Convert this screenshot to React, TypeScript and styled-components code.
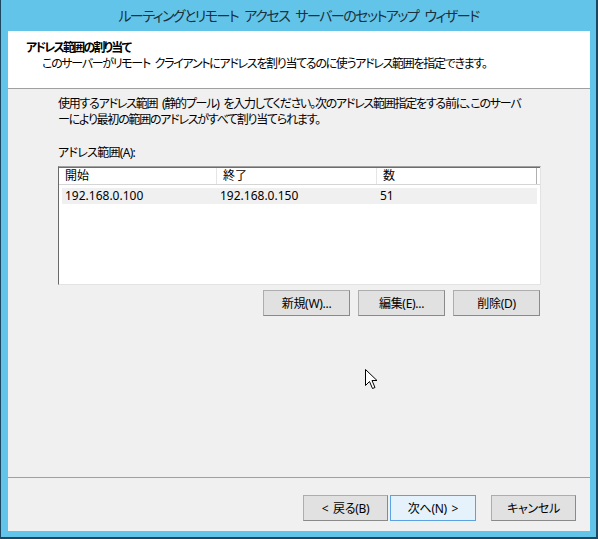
import React from "react";
import styled, { createGlobalStyle } from "styled-components";

const Global = createGlobalStyle`
  html, body { margin: 0; padding: 0; }
  body {
    width: 598px; height: 539px; overflow: hidden;
    font-family: "Noto Sans", "Noto Sans CJK JP", sans-serif;
    font-feature-settings: "palt" 1;
    color: #000;
  }
`;

const Window = styled.div`
  width: 598px;
  height: 539px;
  box-sizing: border-box;
  background: #62c4e8;
  border-left: 1px solid #1d4660;
  border-right: 2px solid #1d4660;
  border-bottom: 2px solid #1d4660;
  display: flex;
  flex-direction: column;
  position: relative;
`;

const TitleBar = styled.div`
  height: 31px;
  display: flex;
  align-items: center;
  justify-content: center;
  font-size: 14px;
  letter-spacing: -1.5px;
  word-spacing: 4px;
  color: #1b2f3c;
  padding-bottom: 1px;
  box-sizing: border-box;
`;

const Client = styled.div`
  flex: 1;
  margin: 0 6px 6px 7px;
  background: #f0f0f0;
  display: flex;
  flex-direction: column;
`;

const Header = styled.div`
  height: 58px;
  box-sizing: border-box;
  background: #fff;
  border-bottom: 1px solid #a0a0a0;
  padding: 9px 0 0 18px;
  font-size: 12px;
  line-height: 16px;
`;

const HeaderTitle = styled.div`
  font-weight: bold;
  letter-spacing: -1.8px;
`;

const HeaderSub = styled.div`
  padding-left: 16px;
  letter-spacing: -1.3px;
  word-spacing: 3px;
`;

const Body = styled.div`
  flex: 1;
  padding: 7px 0 0 50px;
  font-size: 12px;
  line-height: 16px;
  display: flex;
  flex-direction: column;
`;

const Intro = styled.p`
  margin: 0;
  letter-spacing: -1.25px;
  word-spacing: 3px;
`;

const FieldLabel = styled.div`
  margin-top: 17px;
  letter-spacing: -0.7px;
`;

const ListBox = styled.div`
  margin-top: 5px;
  width: 483px;
  height: 119px;
  box-sizing: border-box;
  background: #fff;
  border-top: 1px solid #a0a0a0;
  border-left: 1px solid #696969;
  border-right: 1px solid #e3e3e3;
  border-bottom: 1px solid #e3e3e3;
  padding: 0 0 0 3px;
`;

const HeaderRow = styled.div`
  display: grid;
  grid-template-columns: 158px 160px 160px;
  height: 18px;
  box-sizing: border-box;
  border-top: 1px solid #6d6d6d;
  border-bottom: 1px solid #d5d5d5;
  margin-left: -3px;
`;

const HeaderCell = styled.div<{ $last?: boolean }>`
  padding-left: 6px;
  line-height: 16px;
  border-right: 1px solid ${(p) => (p.$last ? "#b0b0b0" : "#e5e5e5")};
`;

const DataRow = styled.div`
  display: grid;
  grid-template-columns: 155px 160px 160px;
  margin-top: 3px;
  width: 475px;
  height: 16px;
  background: #f0f0f0;
`;

const DataCell = styled.div`
  padding-left: 3px;
  line-height: 16px;
`;

const ButtonRow = styled.div`
  display: flex;
  gap: 8px;
  justify-content: flex-end;
  width: 482px;
  margin-top: 5px;
`;

const Button = styled.button<{ $focused?: boolean; $w?: number }>`
  width: ${(p) => p.$w ?? 87}px;
  height: 26px;
  box-sizing: border-box;
  font-family: inherit;
  font-feature-settings: "palt" 1;
  font-size: 12px;
  letter-spacing: -0.3px;
  word-spacing: 2px;
  color: #000;
  padding: 0;
  background: ${(p) => (p.$focused ? "#e5f1fb" : "#e1e1e1")};
  border: 1px solid ${(p) => (p.$focused ? "#5aa2e0" : "#adadad")};
  border-right-color: ${(p) => (p.$focused ? "#5aa2e0" : "#8a8a8a")};
  border-bottom-color: ${(p) => (p.$focused ? "#5aa2e0" : "#8a8a8a")};
`;

const Footer = styled.div`
  height: 54px;
  box-sizing: border-box;
  border-top: 1px solid #a0a0a0;
  display: flex;
  justify-content: flex-end;
  align-items: flex-start;
  padding: 17px 14px 0 0;
`;

const FooterGroup = styled.div`
  display: flex;
  gap: 2px;
  margin-right: 15px;
`;

const Cursor = styled.svg`
  position: absolute;
  left: 364px;
  top: 369px;
`;

export default function App() {
  return (
    <>
      <Global />
      <Window>
        <TitleBar>ルーティングとリモート アクセス サーバーのセットアップ ウィザード</TitleBar>
        <Client>
          <Header>
            <HeaderTitle>アドレス範囲の割り当て</HeaderTitle>
            <HeaderSub>
              このサーバーがリモート クライアントにアドレスを割り当てるのに使うアドレス範囲を指定できます。
            </HeaderSub>
          </Header>
          <Body>
            <Intro>
              使用するアドレス範囲 (静的プール) を入力してください。次のアドレス範囲指定をする前に、このサーバ
              <br />
              ーにより最初の範囲のアドレスがすべて割り当てられます。
            </Intro>
            <FieldLabel>アドレス範囲(A):</FieldLabel>
            <ListBox>
              <HeaderRow>
                <HeaderCell>開始</HeaderCell>
                <HeaderCell>終了</HeaderCell>
                <HeaderCell $last>数</HeaderCell>
              </HeaderRow>
              <DataRow>
                <DataCell>192.168.0.100</DataCell>
                <DataCell>192.168.0.150</DataCell>
                <DataCell>51</DataCell>
              </DataRow>
            </ListBox>
            <ButtonRow>
              <Button>新規(W)...</Button>
              <Button>編集(E)...</Button>
              <Button>削除(D)</Button>
            </ButtonRow>
          </Body>
          <Footer>
            <FooterGroup>
              <Button $w={85}>&lt; 戻る(B)</Button>
              <Button $w={86} $focused>次へ(N) &gt;</Button>
            </FooterGroup>
            <Button $w={85}>キャンセル</Button>
          </Footer>
        </Client>
        <Cursor width="13" height="21" viewBox="0 0 13 21">
          <path
            d="M0.5 0.5 L0.5 16.5 L4.5 12.5 L7.5 19.5 L10 18.5 L7 11.5 L12 11.5 Z"
            fill="#fff"
            stroke="#000"
            strokeWidth="1"
            strokeLinejoin="miter"
          />
        </Cursor>
      </Window>
    </>
  );
}
